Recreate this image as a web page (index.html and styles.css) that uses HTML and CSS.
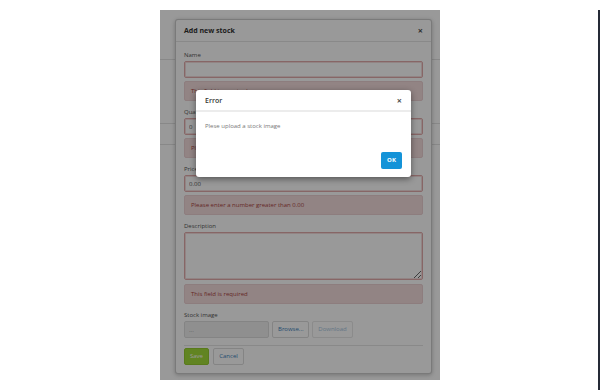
FILE: index.html
```html
<!DOCTYPE html>
<html lang="en">
<head>
    <meta charset="UTF-8">
    <meta name="viewport" content="width=device-width, initial-scale=1.0">
    <title>Add new stock</title>
    <link rel="stylesheet" href="styles.css">
</head>
<body>
    <div class="screen">
        <div class="frame">
            <div class="page">
                <div class="page-nav"></div>
                <div class="page-bar"></div>
            </div>

            <div class="modal stock-modal">
                <div class="modal-header">
                    <h4>Add new stock</h4>
                    <span class="close">&times;</span>
                </div>
                <form class="modal-body">
                    <div class="field">
                        <label>Name</label>
                        <input class="input" type="text">
                        <div class="alert">This field is required</div>
                    </div>
                    <div class="field">
                        <label>Quantity</label>
                        <input class="input" type="text" value="0">
                        <div class="alert">Please enter a number greater than 0</div>
                    </div>
                    <div class="field">
                        <label>Price</label>
                        <input class="input" type="text" value="0.00">
                        <div class="alert">Please enter a number greater than 0.00</div>
                    </div>
                    <div class="field">
                        <label>Description</label>
                        <textarea class="input textarea"></textarea>
                        <div class="alert">This field is required</div>
                    </div>
                    <div class="field last">
                        <label>Stock image</label>
                        <div class="file-row">
                            <input class="input file-name" type="text" value="..." readonly>
                            <button type="button" class="btn browse-btn">Browse...</button>
                            <button type="button" class="btn download-btn">Download</button>
                        </div>
                    </div>
                    <div class="modal-footer">
                        <button type="button" class="btn save-btn">Save</button>
                        <button type="button" class="btn cancel-btn">Cancel</button>
                    </div>
                </form>
            </div>

            <div class="backdrop"></div>

            <div class="modal error-modal">
                <div class="error-header">
                    <h4>Error</h4>
                    <span class="close">&times;</span>
                </div>
                <div class="error-body">Plese upload a stock image</div>
                <div class="error-footer">
                    <button type="button" class="btn ok-btn">OK</button>
                </div>
            </div>
        </div>
    </div>
</body>
</html>
```

FILE: styles.css
```css
/* Reset */
* {
    margin: 0;
    padding: 0;
    box-sizing: border-box;
}

body {
    font-family: 'Open Sans', sans-serif;
    font-size: 6px;
    color: #333;
    background-color: #fff;
}

.screen {
    width: 600px;
    height: 390px;
    border-right: 2px solid #252a36;
    border-bottom: 2px solid #e6e6e6;
}

.frame {
    position: relative;
    width: 280px;
    height: 370px;
    margin: 10px 0 0 160px;
    overflow: hidden;
    background-color: #fff;
}

/* Page behind the dialogs */
.page-nav {
    height: 50px;
    border-bottom: 1px solid #e3e3e3;
}

.page-bar {
    height: 22px;
    margin-top: 63px;
    border-top: 1px solid #e3e3e3;
    border-bottom: 1px solid #e3e3e3;
}

/* Modals */
.modal {
    position: absolute;
    background-color: #fff;
    border: 1px solid rgba(0,0,0,0.2);
    border-radius: 3px;
}

.stock-modal {
    left: 15px;
    top: 9px;
    width: 257px;
    box-shadow: 0 1px 4px rgba(0,0,0,0.25);
}

.modal-header {
    display: flex;
    justify-content: space-between;
    align-items: center;
    height: 22px;
    padding: 0 8px;
    border-bottom: 1px solid #e5e5e5;
}

.modal-header h4 {
    font-size: 7px;
    font-weight: 700;
    color: #333;
}

.close {
    font-size: 9px;
    font-weight: 700;
    line-height: 1;
    color: #000;
    opacity: 0.7;
}

.modal-body {
    padding: 8px 8px 8px;
}

.field {
    margin-bottom: 6px;
}

.field.last {
    margin-bottom: 0;
}

.field label {
    display: block;
    line-height: 10px;
    margin-bottom: 1px;
    color: #555;
}

.input {
    display: block;
    width: 100%;
    height: 17px;
    padding: 0 4px;
    border: 1px solid #e2aaaa;
    border-radius: 2px;
    background-color: #fff;
    box-shadow: inset 0 0 0 1px #f4dcdc;
    font: inherit;
    color: #555;
    outline: none;
}

.textarea {
    height: 48px;
    margin-top: 1px;
    resize: vertical;
}

.alert {
    height: 20px;
    margin-top: 3px;
    padding: 0 6px;
    line-height: 18px;
    background-color: #f4dcdc;
    border: 1px solid #ecd0d3;
    border-radius: 2px;
    color: #a94442;
}

.textarea + .alert {
    margin-top: 4px;
}

.file-row {
    display: flex;
    gap: 3px;
}

.file-name {
    width: 85px;
    background-color: #eee;
    border-color: #ddd;
    box-shadow: none;
    color: #999;
}

.btn {
    height: 17px;
    padding: 0 5px;
    border: 1px solid #ddd;
    border-radius: 2px;
    background-color: #fff;
    font: inherit;
    line-height: 15px;
    color: #3a7fbb;
}

.browse-btn {
    width: 37px;
}

.download-btn {
    width: 41px;
    color: #a6c6e0;
    border-color: #e8e8e8;
}

.modal-footer {
    display: flex;
    gap: 4px;
    margin-top: 7px;
    padding-top: 2px;
    border-top: 1px solid #e5e5e5;
}

.save-btn {
    width: 25px;
    background-color: #a2dc3a;
    border-color: #94cc30;
    color: #fff;
}

.cancel-btn {
    width: 31px;
}

.backdrop {
    position: absolute;
    inset: 0;
    background-color: rgba(0,0,0,0.4);
}

/* Error dialog */
.error-modal {
    left: 36px;
    top: 80px;
    width: 215px;
    border: none;
    box-shadow: 0 2px 6px rgba(0,0,0,0.45);
}

.error-header {
    display: flex;
    justify-content: space-between;
    align-items: center;
    height: 22px;
    padding: 0 9px;
    border-bottom: 2px solid #ececec;
}

.error-header h4 {
    font-size: 7px;
    font-weight: 600;
    color: #333;
}

.error-body {
    padding: 9px 9px 0;
    line-height: 10px;
    color: #777;
}

.error-footer {
    display: flex;
    justify-content: flex-end;
    padding: 21px 9px 8px;
}

.ok-btn {
    width: 21px;
    padding: 0;
    border: none;
    background-color: #1493d8;
    color: #fff;
    font-weight: 700;
    line-height: 17px;
}
```
